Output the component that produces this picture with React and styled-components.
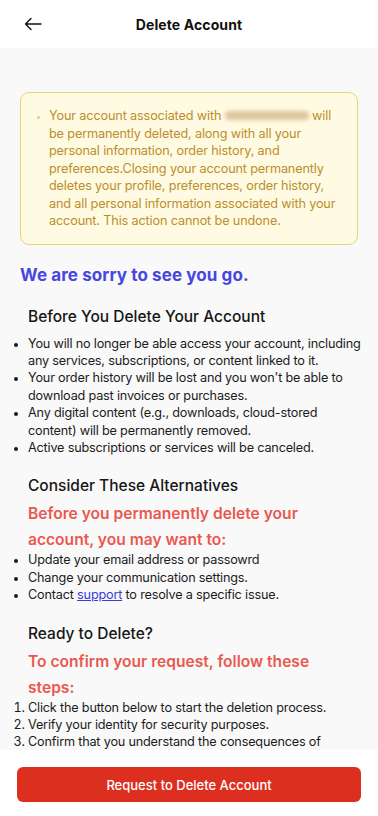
import React from 'react'
import styled, { createGlobalStyle } from 'styled-components'

const Global = createGlobalStyle`
  * { box-sizing: border-box; }
  body {
    margin: 0;
    font-family: Inter, "Noto Sans", sans-serif;
    background: #fff;
  }
`

const Page = styled.div`
  width: 378px;
  height: 816px;
  display: flex;
  flex-direction: column;
  overflow: hidden;
  background: #fff;
`

const Header = styled.header`
  height: 48px;
  flex-shrink: 0;
  display: grid;
  grid-template-columns: 60px 1fr 60px;
  align-items: center;
  background: #fff;
  h1 {
    margin: 0;
    text-align: center;
    font-size: 14px;
    font-weight: 700;
    color: #111;
    letter-spacing: 0.1px;
  }
`

const BackButton = styled.button`
  border: none;
  background: none;
  padding: 0 0 0 24px;
  display: flex;
  align-items: center;
  cursor: pointer;
`

const Body = styled.main`
  flex: 1;
  overflow: hidden;
  background: #f9f9f9;
  padding: 44px 20px 0;
`

const Notice = styled.div`
  border: 1px solid #ecd27f;
  background: #fffbe3;
  border-radius: 9px;
  padding: 14px 14px 14px 12px;
  ul {
    margin: 0;
    padding-left: 16px;
    color: #bd8d2b;
    font-size: 12.7px;
    letter-spacing: -0.15px;
    line-height: 17.5px;
  }
  li::marker {
    color: #d9c9a8;
    font-size: 8px;
  }
`

const Hidden = styled.span`
  display: inline-block;
  width: 84px;
  height: 9px;
  vertical-align: 0px;
  border-radius: 4px;
  background: #dcc59c;
  filter: blur(2px);
`

const Sorry = styled.h2`
  margin: 19px 0 0;
  font-size: 17px;
  line-height: 22px;
  font-weight: 700;
  color: #4646e0;
  letter-spacing: 0.1px;
`

const Section = styled.section`
  margin-top: ${p => p.$top || 20}px;
`

const Title = styled.h3`
  margin: 0 0 8px 8px;
  font-size: 15.5px;
  line-height: 20px;
  font-weight: 500;
  color: #161616;
`

const Lead = styled.p`
  margin: -3px 24px -2px 8px;
  font-size: 15.6px;
  font-weight: 600;
  line-height: 26px;
  color: #e9584f;
`

const List = styled.ul`
  margin: 0 -6px 0 0;
  padding-left: 8px;
  color: #1c1c1c;
  font-size: 12.7px;
  letter-spacing: -0.2px;
  line-height: 17.4px;
  li::marker {
    font-size: 11px;
  }
`

const Steps = styled.ol`
  margin: 0 -6px 0 0;
  padding-left: 8px;
  color: #1c1c1c;
  font-size: 12.7px;
  letter-spacing: -0.2px;
  line-height: 17.4px;
`

const Link = styled.a`
  color: #3b3bd9;
  text-decoration: underline;
`

const Footer = styled.footer`
  flex-shrink: 0;
  background: #fff;
  padding: 17px 17px 14px 17px;
`

const DeleteButton = styled.button`
  width: 100%;
  height: 35px;
  border: none;
  border-radius: 6px;
  background: #dc2f1f;
  color: #fff;
  font-family: inherit;
  font-size: 13px;
  font-weight: 500;
  cursor: pointer;
`

export default function App() {
  return (
    <Page>
      <Global />
      <Header>
        <BackButton aria-label="Back">
          <svg width="18" height="14" viewBox="0 0 18 14" fill="none" stroke="#111" strokeWidth="1.4" strokeLinecap="round" strokeLinejoin="round">
            <path d="M17 7H1.5M7 1.5L1.5 7L7 12.5" />
          </svg>
        </BackButton>
        <h1>Delete Account</h1>
        <span />
      </Header>
      <Body>
        <Notice>
          <ul>
            <li>
              Your account associated with <Hidden /> will be permanently
              deleted, along with all your personal information, order history, and
              preferences.Closing your account permanently deletes your profile, preferences,
              order history, and all personal information associated with your account. This
              action cannot be undone.
            </li>
          </ul>
        </Notice>

        <Sorry>We are sorry to see you go.</Sorry>

        <Section $top={21}>
          <Title>Before You Delete Your Account</Title>
          <List>
            <li>You will no longer be able access your account, including any services, subscriptions, or content linked to it.</li>
            <li>Your order history will be lost and you won't be able to download past invoices or purchases.</li>
            <li>Any digital content (e.g., downloads, cloud-stored content) will be permanently removed.</li>
            <li>Active subscriptions or services will be canceled.</li>
          </List>
        </Section>

        <Section>
          <Title>Consider These Alternatives</Title>
          <Lead>Before you permanently delete your account, you may want to:</Lead>
          <List>
            <li>Update your email address or passowrd</li>
            <li>Change your communication settings.</li>
            <li>Contact <Link href="#">support</Link> to resolve a specific issue.</li>
          </List>
        </Section>

        <Section>
          <Title>Ready to Delete?</Title>
          <Lead>To confirm your request, follow these steps:</Lead>
          <Steps>
            <li>Click the button below to start the deletion process.</li>
            <li>Verify your identity for security purposes.</li>
            <li>Confirm that you understand the consequences of deleting your account.</li>
          </Steps>
        </Section>
      </Body>
      <Footer>
        <DeleteButton>Request to Delete Account</DeleteButton>
      </Footer>
    </Page>
  )
}
